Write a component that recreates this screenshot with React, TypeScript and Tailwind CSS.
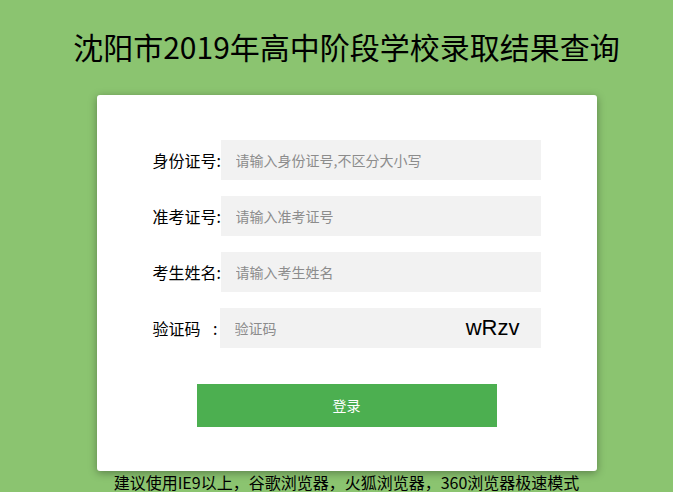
export default function App() {
  const rows = [
    { label: '身份证号:', placeholder: '请输入身份证号,不区分大小写' },
    { label: '准考证号:', placeholder: '请输入准考证号' },
    { label: '考生姓名:', placeholder: '请输入考生姓名' },
  ];

  return (
    <div
      className="min-h-screen bg-[#8bc470] pl-[20px] pt-[24px] text-black"
      style={{ fontFamily: '"Noto Sans CJK SC", "Noto Sans", sans-serif' }}
    >
      <h1 className="text-center text-[30px] leading-[44px] font-normal">
        沈阳市2019年高中阶段学校录取结果查询
      </h1>

      <div className="mx-auto mt-[27px] h-[376px] w-[500px] rounded-[3px] bg-white pt-[45px] shadow-[0_2px_8px_rgba(0,0,0,0.35)]">
        <div className="mx-auto flex w-[388px] flex-col gap-4">
          {rows.map((r) => (
            <div key={r.label} className="flex items-center">
              <div className="w-[68px] shrink-0 whitespace-nowrap text-[16px] leading-[20px]">{r.label}</div>
              <input
                className="h-[40px] w-[320px] shrink-0 bg-[#f2f2f2] pl-[15px] text-[14px] outline-none placeholder:text-[#8c8c8c]"
                placeholder={r.placeholder}
              />
            </div>
          ))}
          <div className="flex items-center">
            <div className="flex w-[67px] shrink-0 justify-between whitespace-nowrap pr-[2px] text-[16px] leading-[20px]">
              <span>验证码</span>
              <span>:</span>
            </div>
            <div className="flex h-[40px] w-[321px] shrink-0 items-center justify-between bg-[#f2f2f2] pl-[15px] pr-[21px]">
              <input
                className="w-[150px] bg-transparent text-[14px] outline-none placeholder:text-[#8c8c8c]"
                placeholder="验证码"
              />
              <span
                className="text-[22px] leading-none"
                style={{ fontFamily: '"Liberation Sans", Arial, sans-serif' }}
              >
                wRzv
              </span>
            </div>
          </div>
        </div>

        <button className="mx-auto mt-[36px] flex h-[43px] w-[300px] items-center justify-center bg-[#4caf50] text-[14px] text-white">
          登录
        </button>
      </div>

      <p className="mt-[1px] text-center text-[16px] leading-[20px]">
        建议使用IE9以上，谷歌浏览器，火狐浏览器，360浏览器极速模式
      </p>
    </div>
  );
}
